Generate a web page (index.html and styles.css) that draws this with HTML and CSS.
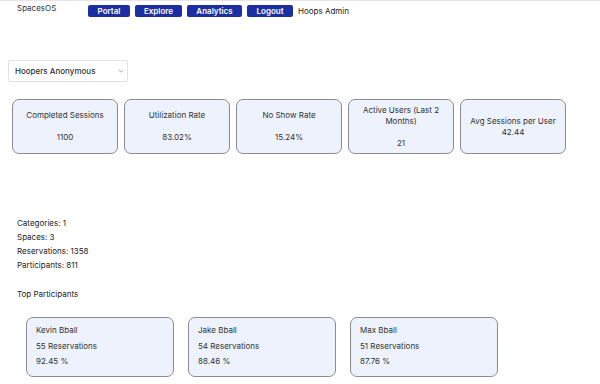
FILE: index.html
```html
<!DOCTYPE html>
<html lang="en">
<head>
    <meta charset="UTF-8">
    <meta name="viewport" content="width=device-width, initial-scale=1.0">
    <title>SpacesOS Analytics</title>
    <link rel="stylesheet" href="styles.css">
</head>
<body>
    <!-- Header Section -->
    <header class="topbar">
        <div class="brand">SpacesOS</div>
        <nav class="nav">
            <a class="nav-btn" href="#">Portal</a>
            <a class="nav-btn" href="#">Explore</a>
            <a class="nav-btn" href="#">Analytics</a>
            <a class="nav-btn" href="#">Logout</a>
            <span class="user-name">Hoops Admin</span>
        </nav>
    </header>

    <!-- Main Content Section -->
    <main class="dashboard">
        <div class="select-wrap">
            <select class="space-select">
                <option>Hoopers Anonymous</option>
            </select>
            <svg class="select-arrow" width="6" height="4" viewBox="0 0 6 4"><path d="M0.5 0.8 L3 3.2 L5.5 0.8" fill="none" stroke="#999" stroke-width="0.8"/></svg>
        </div>

        <div class="stat-row">
            <div class="stat-card">
                <p class="stat-label">Completed Sessions</p>
                <p class="stat-value">1100</p>
            </div>
            <div class="stat-card">
                <p class="stat-label">Utilization Rate</p>
                <p class="stat-value">83.02%</p>
            </div>
            <div class="stat-card">
                <p class="stat-label">No Show Rate</p>
                <p class="stat-value">15.24%</p>
            </div>
            <div class="stat-card">
                <p class="stat-label">Active Users (Last 2 Months)</p>
                <p class="stat-value">21</p>
            </div>
            <div class="stat-card">
                <p class="stat-label">Avg Sessions per User<br>42.44</p>
            </div>
        </div>

        <div class="summary">
            <p>Categories: 1</p>
            <p>Spaces: 3</p>
            <p>Reservations: 1358</p>
            <p>Participants: 811</p>
        </div>

        <h3 class="section-title">Top Participants</h3>

        <div class="top-row">
            <div class="person-card">
                <p>Kevin Bball</p>
                <p>55 Reservations</p>
                <p>92.45 %</p>
            </div>
            <div class="person-card">
                <p>Jake Bball</p>
                <p>54 Reservations</p>
                <p>88.46 %</p>
            </div>
            <div class="person-card">
                <p>Max Bball</p>
                <p>51 Reservations</p>
                <p>87.76 %</p>
            </div>
        </div>
    </main>
</body>
</html>
```

FILE: styles.css
```css
/* General Styles */
body {
    font-family: Inter, "Noto Sans", sans-serif;
    font-size: 8px;
    background-color: #fff;
    color: #222;
    margin: 0;
    padding: 0;
    border-top: 1px solid #e6e6e6;
}
p {
    margin: 0;
}

/* Header */
.topbar {
    display: flex;
    align-items: flex-start;
    padding: 1px 0 0 17px;
}
.brand {
    width: 71px;
    line-height: 12px;
    color: #333;
}
.nav {
    display: flex;
    align-items: center;
    gap: 5px;
    margin-top: 3px;
}
.nav-btn {
    display: block;
    background-color: #1b2fa3;
    color: #fff;
    font-weight: 600;
    text-decoration: none;
    text-align: center;
    line-height: 12px;
    border-radius: 2px;
}
.nav-btn:nth-child(1) { width: 42px; }
.nav-btn:nth-child(2) { width: 47px; }
.nav-btn:nth-child(3) { width: 55px; }
.nav-btn:nth-child(4) { width: 46px; }
.user-name {
    color: #222;
    line-height: 12px;
}

/* Dashboard */
.dashboard {
    padding: 0;
}
.select-wrap {
    position: relative;
    width: 120px;
    margin: 43px 0 0 8px;
}
.space-select {
    appearance: none;
    display: block;
    width: 120px;
    height: 22px;
    padding: 0 0 0 6px;
    background: #fff;
    border: 1px solid #e2e2e2;
    border-radius: 2px;
    font-family: Inter, "Noto Sans", sans-serif;
    font-size: 8px;
    font-weight: 500;
    color: #333;
}
.select-arrow {
    position: absolute;
    right: 4px;
    top: 9px;
}

.stat-row {
    display: flex;
    gap: 6px;
    margin: 17px 0 0 12px;
}
.stat-card {
    width: 106px;
    height: 55px;
    box-sizing: border-box;
    display: flex;
    flex-direction: column;
    justify-content: center;
    align-items: center;
    text-align: center;
    background-color: #edf2fc;
    border: 1px solid #8c8c8c;
    border-radius: 7px;
    padding: 0 8px;
    line-height: 11px;
    color: #333;
}
.stat-value {
    margin-top: 11px;
}

.summary {
    margin: 62px 0 0 17px;
    line-height: 14px;
}
.section-title {
    margin: 15px 0 0 17px;
    font-size: 8px;
    font-weight: 400;
    line-height: 14px;
}

.top-row {
    display: flex;
    gap: 14px;
    margin: 16px 0 0 26px;
}
.person-card {
    width: 148px;
    height: 60px;
    box-sizing: border-box;
    padding: 5px 9px;
    background-color: #edf2fc;
    border: 1px solid #8c8c8c;
    border-radius: 7px;
    line-height: 15.5px;
    color: #333;
}
```
